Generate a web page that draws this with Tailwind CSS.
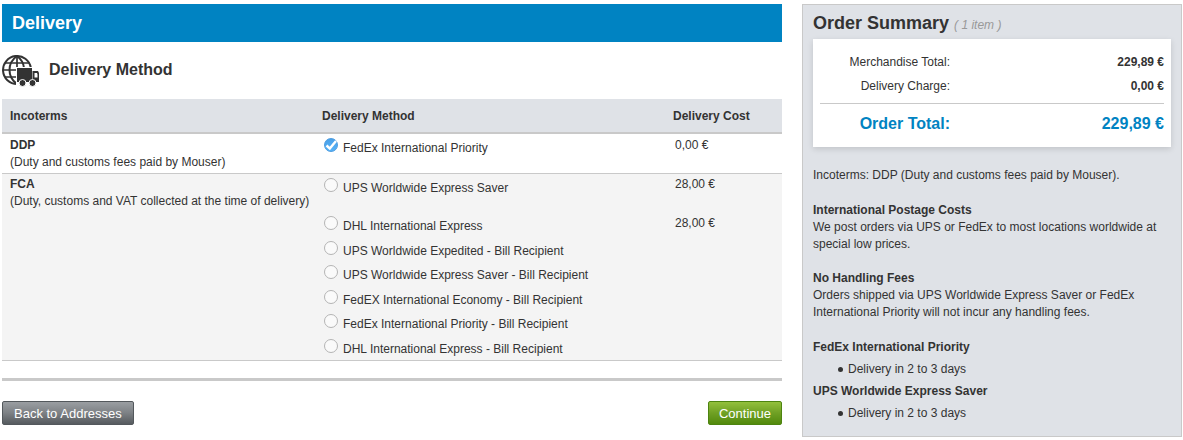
<!DOCTYPE html>
<html lang="en">
<head>
    <meta charset="UTF-8">
    <meta name="viewport" content="width=device-width, initial-scale=1.0">
    <title>Delivery</title>

    <!-- Tailwind CSS -->
    <script src="https://cdn.jsdelivr.net/npm/@tailwindcss/browser@4"></script>
</head>
<body class="bg-white font-['Liberation_Sans',Arial,sans-serif] text-xs leading-[17px] text-[#333]">

<div class="flex items-start gap-5 pt-1 pl-0.5 pr-px">

    <!-- Delivery form -->
    <main class="flex-1 min-w-0">
        <h1 class="bg-[#0083c2] text-white text-lg leading-[38px] font-bold px-2.5">Delivery</h1>

        <div class="flex items-start gap-2.5 h-[57px] pt-[13px]">
            <svg class="w-[37px] h-8" viewBox="0 0 37 32" fill="none" aria-hidden="true">
                <!-- globe -->
                <g stroke="#333" stroke-width="2">
                    <path d="M15 29A14 14 0 1 1 28.800 12.500"/>
                    <path d="M15 29C5 22 5 8 15 1C19 4 21.500 8 22 13"/>
                    <path d="M15 1V29M3 8H27M1 15H15M3 22H15" stroke-width="1.700"/>
                </g>
                <!-- truck -->
                <path fill="#fff" d="M14 12H31V15H37V30H14Z"/>
                <path fill="#333" d="M15 13H30V27H15Z"/>
                <path fill="#333" fill-rule="evenodd" d="M30.500 16H36L37 18V27H30.500ZM32.500 18V22.500H35.500V19.500L35 18Z"/>
                <circle cx="20.500" cy="28" r="3.500" fill="#333" stroke="#fff"/>
                <circle cx="30.500" cy="28" r="3.500" fill="#333" stroke="#fff"/>
            </svg>
            <h2 class="text-base leading-[30px] font-bold">Delivery Method</h2>
        </div>

        <table class="w-full table-fixed border-separate border-spacing-0 text-left">
            <thead>
                <tr class="bg-[#dfe2e7] h-[35px]">
                    <th class="w-[40%] pl-2 pt-0.5 border-b-2 border-[#c9c9c9]">Incoterms</th>
                    <th class="w-[45%] pl-2 pt-0.5 border-b-2 border-[#c9c9c9]">Delivery Method</th>
                    <th class="w-[15%] pl-2 pt-0.5 border-b-2 border-[#c9c9c9]">Delivery Cost</th>
                </tr>
            </thead>
            <tbody class="align-top">
                <tr class="h-10">
                    <td class="pl-2 pt-[3px] border-b border-[#c9c9c9]"><b>DDP</b><br>(Duty and customs fees paid by Mouser)</td>
                    <td class="pl-2.5 pt-1 border-b border-[#c9c9c9]">
                        <label class="flex items-baseline gap-[5px]">
                            <span class="relative flex">
                                <input type="radio" name="method" checked class="appearance-none size-3.5 rounded-full border border-[#4a9be0] bg-linear-to-b from-[#4aa0e8] to-[#55b2f8]">
                                <svg class="absolute inset-0 size-3.5 pointer-events-none" viewBox="0 0 14 14" fill="none" stroke="#fff" stroke-width="2.400" aria-hidden="true"><path d="M2.500 7.500L5.800 10.500L12 3"/></svg>
                            </span>
                            FedEx International Priority
                        </label>
                    </td>
                    <td class="pl-2.5 pt-[3px] border-b border-[#c9c9c9]">0,00 €</td>
                </tr>
            </tbody>
            <tbody class="align-top bg-[#f4f4f4]">
                <tr class="h-[38px]">
                    <td rowspan="7" class="pl-2 pt-0.5 border-b border-[#c9c9c9]"><b>FCA</b><br><span class="whitespace-nowrap">(Duty, customs and VAT collected at the time of delivery)</span></td>
                    <td class="pl-2.5 pt-1">
                        <label class="flex items-baseline gap-[5px]"><input type="radio" name="method" class="appearance-none size-3.5 rounded-full border border-[#b4b4b4] bg-[#fafafa]">UPS Worldwide Express Saver</label>
                    </td>
                    <td class="pl-2.5 pt-0.5">28,00 €</td>
                </tr>
                <tr class="h-[25px]">
                    <td class="pl-2.5 pt-1">
                        <label class="flex items-baseline gap-[5px]"><input type="radio" name="method" class="appearance-none size-3.5 rounded-full border border-[#b4b4b4] bg-[#fafafa]">DHL International Express</label>
                    </td>
                    <td class="pl-2.5 pt-[3px]">28,00 €</td>
                </tr>
                <tr class="h-6">
                    <td class="pl-2.5 pt-1">
                        <label class="flex items-baseline gap-[5px]"><input type="radio" name="method" class="appearance-none size-3.5 rounded-full border border-[#b4b4b4] bg-[#fafafa]">UPS Worldwide Expedited - Bill Recipient</label>
                    </td>
                    <td></td>
                </tr>
                <tr class="h-[25px]">
                    <td class="pl-2.5 pt-1">
                        <label class="flex items-baseline gap-[5px]"><input type="radio" name="method" class="appearance-none size-3.5 rounded-full border border-[#b4b4b4] bg-[#fafafa]">UPS Worldwide Express Saver - Bill Recipient</label>
                    </td>
                    <td></td>
                </tr>
                <tr class="h-6">
                    <td class="pl-2.5 pt-1">
                        <label class="flex items-baseline gap-[5px]"><input type="radio" name="method" class="appearance-none size-3.5 rounded-full border border-[#b4b4b4] bg-[#fafafa]">FedEX International Economy - Bill Recipient</label>
                    </td>
                    <td></td>
                </tr>
                <tr class="h-[25px]">
                    <td class="pl-2.5 pt-1">
                        <label class="flex items-baseline gap-[5px]"><input type="radio" name="method" class="appearance-none size-3.5 rounded-full border border-[#b4b4b4] bg-[#fafafa]">FedEx International Priority - Bill Recipient</label>
                    </td>
                    <td></td>
                </tr>
                <tr class="h-[26px]">
                    <td class="pl-2.5 pt-1 border-b border-[#c9c9c9]">
                        <label class="flex items-baseline gap-[5px]"><input type="radio" name="method" class="appearance-none size-3.5 rounded-full border border-[#b4b4b4] bg-[#fafafa]">DHL International Express - Bill Recipient</label>
                    </td>
                    <td class="border-b border-[#c9c9c9]"></td>
                </tr>
            </tbody>
        </table>

        <hr class="mt-[17px] mb-5 border-t-3 border-[#c9c9c9]">

        <!-- Navigation -->
        <div class="flex justify-between text-[13px] text-white text-shadow-[1px_1px_1px_#000000]">
            <button type="button" class="h-6 px-[11px] rounded-xs border border-[#53585c] bg-linear-to-b from-[#9a9ea2] from-0% via-[#7d8185] via-50% to-[#565b5f] to-100%">Back to Addresses</button>
            <button type="button" class="h-6 px-2.5 rounded-xs border border-[#4d8410] bg-linear-to-b from-[#93c03c] from-0% via-[#6fa024] via-50% to-[#528a0b] to-100%">Continue</button>
        </div>
    </main>

    <!-- Order summary -->
    <aside class="w-[380px] shrink-0 bg-[#dfe2e7] border border-[#c9c9c9] px-2.5 pt-2 pb-[9px]">
        <h2 class="text-lg leading-5 font-bold mb-1.5">Order Summary <span class="text-xs font-normal italic text-[#999]">( 1 item )</span></h2>

        <dl class="grid grid-cols-[130px_1fr] bg-white px-[7px] py-[11px] text-right leading-6 shadow-[0_2px_6px_#00000022]">
            <dt>Merchandise Total:</dt>
            <dd class="font-bold">229,89 €</dd>
            <dt>Delivery Charge:</dt>
            <dd class="font-bold">0,00 €</dd>
            <dt class="mt-[5px] pt-2 border-t border-[#c9c9c9] text-base leading-6 font-bold text-[#0083c2]">Order Total:</dt>
            <dd class="mt-[5px] pt-2 border-t border-[#c9c9c9] text-base leading-6 font-bold text-[#0083c2]">229,89 €</dd>
        </dl>

        <p class="mt-5">Incoterms: DDP (Duty and customs fees paid by Mouser).</p>

        <h3 class="mt-[18px] font-bold">International Postage Costs</h3>
        <p>We post orders via UPS or FedEx to most locations worldwide at special low prices.</p>

        <h3 class="mt-[17px] font-bold">No Handling Fees</h3>
        <p>Orders shipped via UPS Worldwide Express Saver or FedEx International Priority will not incur any handling fees.</p>

        <h3 class="mt-[18px] font-bold">FedEx International Priority</h3>
        <ul class="pl-[25px] my-[5px]">
            <li class="flex items-center gap-[5px] before:size-[5px] before:rounded-full before:bg-[#333]">Delivery in 2 to 3 days</li>
        </ul>
        <h3 class="font-bold">UPS Worldwide Express Saver</h3>
        <ul class="pl-[25px] my-[5px]">
            <li class="flex items-center gap-[5px] before:size-[5px] before:rounded-full before:bg-[#333]">Delivery in 2 to 3 days</li>
        </ul>
    </aside>

</div>

</body>
</html>
